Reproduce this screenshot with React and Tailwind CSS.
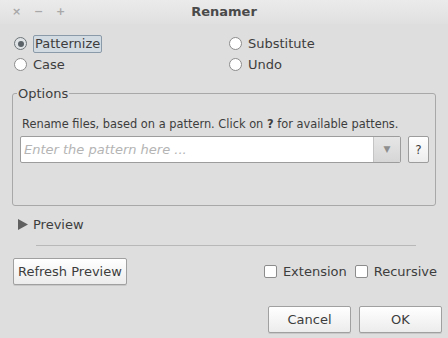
import { useState } from 'react';

function Radio({ checked, label, focused }) {
  return (
    <label className="flex items-center h-[21px] gap-[6px]">
      <span className={`w-[13px] h-[13px] rounded-full border flex items-center justify-center ${checked ? 'border-[#6d7478] bg-[#dfe3e6]' : 'border-[#8c8c8c] bg-white'}`}>
        {checked && <span className="w-[6px] h-[6px] rounded-full bg-[#5b6368]" />}
      </span>
      <span className={focused ? 'px-[1px] border border-[#8b9aa8] bg-[#d3dbe2] rounded-[2px] leading-[16px]' : 'leading-[16px]'}>{label}</span>
    </label>
  );
}

function Check({ label }) {
  return (
    <label className="flex items-center gap-[6px]">
      <span className="w-[13px] h-[13px] rounded-[2px] border border-[#8c8c8c] bg-white" />
      <span>{label}</span>
    </label>
  );
}

export default function App() {
  const [pattern, setPattern] = useState('');

  return (
    <div className="w-[448px] h-[338px] bg-[#dedede] text-[#3d3d3d] text-[13px] overflow-hidden" style={{ fontFamily: '"DejaVu Sans", sans-serif' }}>
      {/* title bar */}
      <div className="h-[24px] flex items-center bg-gradient-to-b from-[#ebebeb] to-[#e0e0e0] relative">
        <div className="flex items-center gap-[13px] pl-[12px] text-[#a8a8a8] text-[11px] font-bold">
          <span className="w-[9px] text-center">×</span>
          <span className="w-[9px] text-center">−</span>
          <span className="w-[9px] text-center">+</span>
        </div>
        <div className="absolute inset-0 flex items-center justify-center font-bold text-[#4a4a4a]">Renamer</div>
      </div>

      {/* mode */}
      <div className="grid grid-cols-[215px_1fr] pl-[14px] pt-[9px]">
        <Radio checked focused label="Patternize" />
        <Radio label="Substitute" />
        <Radio label="Case" />
        <Radio label="Undo" />
      </div>

      {/* options */}
      <fieldset className="mx-[12px] mt-[11px] w-[424px] h-[120px] border border-[#a8a8a8] rounded-[3px] pl-[7px] pr-[6px]">
        <legend className="ml-[-3px] px-[1px] leading-[15px]">Options</legend>
        <div className="text-[11.4px] mt-[16px] ml-[2px] leading-[14px]">
          Rename files, based on a pattern. Click on <b>?</b> for available pattens.
        </div>
        <div className="flex mt-[5px] gap-[7px]">
          <div className="flex w-[381px] h-[27px] border border-[#9c9c9c] rounded-[2px] bg-white overflow-hidden">
            <input
              value={pattern}
              onChange={(e) => setPattern(e.target.value)}
              placeholder="Enter the pattern here ..."
              className="flex-1 min-w-0 px-[3px] outline-none italic placeholder:text-[#b4b4b4]"
            />
            <div className="w-[27px] border-l border-[#c4c4c4] bg-gradient-to-b from-[#e6e6e6] to-[#d6d6d6] flex items-center justify-center text-[#8e8e8e] text-[9px]">▼</div>
          </div>
          <button className="w-[21px] h-[27px] border border-[#9c9c9c] rounded-[2px] bg-gradient-to-b from-white to-[#ececec] text-[12px]">?</button>
        </div>
      </fieldset>

      {/* preview */}
      <div className="flex items-center h-[21px] mt-[8px] pl-[18px] gap-[5px]">
        <svg width="10" height="11" viewBox="0 0 10 11"><path d="M0 0 L10 5.5 L0 11 Z" fill="#606060" /></svg>
        <span>Preview</span>
      </div>
      <div className="ml-[36px] mr-[32px] mt-[10px] h-[1px] bg-[#b8b8b8]" />

      <div className="flex items-center justify-between pl-[13px] pr-[11px] mt-[12px]">
        <button className="h-[27px] px-[4px] border border-[#a0a0a0] rounded-[2px] bg-gradient-to-b from-white to-[#ececec] shadow-[0_1px_0_#c8c8c8]">Refresh Preview</button>
        <div className="flex items-center gap-[8px]">
          <Check label="Extension" />
          <Check label="Recursive" />
        </div>
      </div>

      <div className="flex justify-end gap-[8px] pr-[6px] mt-[21px]">
        <button className="w-[83px] h-[27px] border border-[#a0a0a0] rounded-[2px] bg-gradient-to-b from-white to-[#ececec] shadow-[0_1px_0_#c8c8c8]">Cancel</button>
        <button className="w-[83px] h-[27px] border border-[#a0a0a0] rounded-[2px] bg-gradient-to-b from-white to-[#ececec] shadow-[0_1px_0_#c8c8c8]">OK</button>
      </div>
    </div>
  );
}
